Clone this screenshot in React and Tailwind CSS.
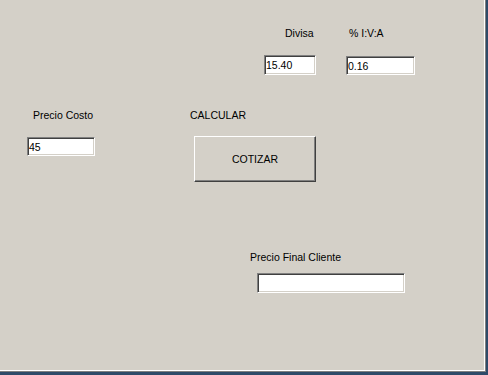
import React from "react";

const sunken =
  "border border-t-[#808080] border-l-[#808080] border-b-white border-r-white shadow-[inset_1px_1px_0_#404040,inset_-1px_-1px_0_#d4d0c8] bg-white text-black outline-none p-0 pl-[1px] font-['Liberation_Sans',Arial,sans-serif] text-[10.5px] leading-[12px]";

function Box({ w, h, value }) {
  return (
    <input
      readOnly
      value={value}
      className={`${sunken} ${w} ${h} block`}
    />
  );
}

export default function App() {
  return (
    <div className="w-[488px] h-[375px] bg-[#2e4a68] font-['Liberation_Sans',Arial,sans-serif] text-[10.5px] leading-[12px] text-black">
      <div className="w-[486px] h-[372px] bg-[#d4d0c8] border-r border-b border-[#808080] shadow-[inset_-1px_-1px_0_#ffffff] flex flex-col">
        {/* Row A */}
        <div className="flex pl-[264px] pt-[27px]">
          <div className="w-[82px] flex flex-col">
            <div className="ml-[21px]">Divisa</div>
            <div className="mt-[16px]">
              <Box w="w-[52px]" h="h-[20px]" value="15.40" />
            </div>
          </div>
          <div className="flex flex-col">
            <div className="ml-[3px]">% I:V:A</div>
            <div className="mt-[17px]">
              <Box w="w-[69px]" h="h-[19px]" value="0.16" />
            </div>
          </div>
        </div>

        {/* Row B */}
        <div className="flex pl-[27px] mt-[34px]">
          <div className="w-[163px] flex flex-col">
            <div className="ml-[6px]">Precio Costo</div>
            <div className="mt-[16px]">
              <Box w="w-[68px]" h="h-[19px]" value="45" />
            </div>
          </div>
          <div className="flex flex-col">
            <div>CALCULAR</div>
            <button
              type="button"
              className="ml-[4px] mt-[15px] w-[122px] h-[46px] bg-[#d4d0c8] border border-t-white border-l-white border-b-[#404040] border-r-[#404040] shadow-[inset_-1px_-1px_0_#808080] text-[10.5px] leading-[12px] font-['Liberation_Sans',Arial,sans-serif] text-black flex items-center justify-center"
            >
              COTIZAR
            </button>
          </div>
        </div>

        {/* Row C */}
        <div className="flex flex-col pl-[250px] mt-[69px]">
          <div>Precio Final Cliente</div>
          <div className="ml-[7px] mt-[10px]">
            <Box w="w-[148px]" h="h-[20px]" value="" />
          </div>
        </div>
      </div>
    </div>
  );
}
